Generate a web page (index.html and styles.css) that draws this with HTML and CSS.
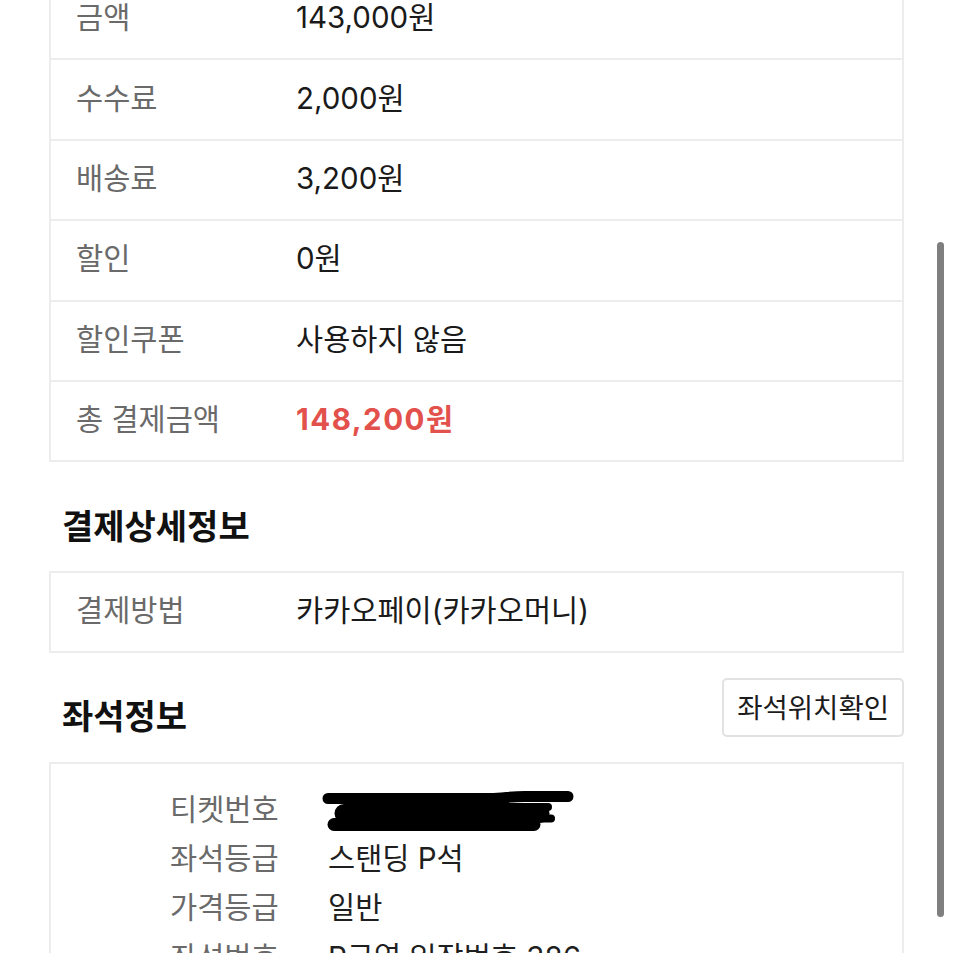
FILE: index.html
```html
<!DOCTYPE html>
<html lang="ko">
<head>
<meta charset="utf-8">
<title>결제정보</title>
<link rel="stylesheet" href="styles.css">
</head>
<body>
<div class="page">
  <div class="table first">
    <div class="row"><div class="label">금액</div><div class="value">143,000원</div></div>
    <div class="row"><div class="label">수수료</div><div class="value">2,000원</div></div>
    <div class="row"><div class="label">배송료</div><div class="value">3,200원</div></div>
    <div class="row"><div class="label">할인</div><div class="value">0원</div></div>
    <div class="row"><div class="label">할인쿠폰</div><div class="value">사용하지 않음</div></div>
    <div class="row"><div class="label">총 결제금액</div><div class="value total">148,200원</div></div>
  </div>

  <h2 class="section-title">결제상세정보</h2>
  <div class="table">
    <div class="row"><div class="label">결제방법</div><div class="value">카카오페이(카카오머니)</div></div>
  </div>

  <div class="section-head">
    <h2 class="section-title inline">좌석정보</h2>
    <button class="btn" type="button">좌석위치확인</button>
  </div>
  <div class="seat-box">
    <div class="seat-row">
      <div class="seat-label">티켓번호</div>
      <div class="seat-value redacted">
        <svg class="scribble" width="256" height="44" viewBox="0 0 256 44">
          <g stroke="#000" stroke-linecap="round" fill="none">
            <path d="M6 11.5 L 168 11.5 C 182 11.5, 190 9, 206 9.5 L 246 9.5" stroke-width="11"/>
            <path d="M22 26.5 L 218 26.5" stroke-width="19"/>
            <path d="M12 37.5 L 212 37.5" stroke-width="13"/>
            <path d="M200 31.5 L 229 31.5" stroke-width="8"/>
            <path d="M160 20 L 226 20" stroke-width="8"/>
          </g>
        </svg>
      </div>
    </div>
    <div class="seat-row"><div class="seat-label">좌석등급</div><div class="seat-value">스탠딩 P석</div></div>
    <div class="seat-row"><div class="seat-label">가격등급</div><div class="seat-value">일반</div></div>
    <div class="seat-row"><div class="seat-label">좌석번호</div><div class="seat-value">P구역 입장번호 386</div></div>
    <div class="seat-row"><div class="seat-label">관람일시</div><div class="seat-value">2023.10.21</div></div>
  </div>
</div>
<div class="scrollbar"></div>
</body>
</html>
```

FILE: styles.css
```css
html, body {
  margin: 0;
  padding: 0;
  background: #fff;
  overflow: hidden;
  height: 953px;
}

body {
  font-family: Inter, "Noto Sans CJK KR", sans-serif;
  color: #1c1c1c;
}

.page {
  padding: 0 49px;
  margin-top: -20px;
}

.table {
  border: 2px solid #ececec;
  border-top-width: 0;
}

.table:not(.first) {
  border-top-width: 2px;
}

.row {
  box-sizing: border-box;
  display: grid;
  grid-template-columns: 220px 1fr;
  align-items: center;
  height: 80.4px;
  padding: 0 0 8px 25px;
  border-bottom: 2px solid #ececec;
  font-size: 29.5px;
}

.row:last-child {
  border-bottom: 0;
  height: 78.4px;
}

.label {
  color: #6a6a6a;
}

.value {
  color: #1a1a1a;
}

.value.total {
  color: #e3514d;
  font-weight: 700;
  letter-spacing: 1.5px;
}

.section-title {
  margin: 44.6px 0 24px 13px;
  font-size: 34px;
  line-height: 40px;
  font-weight: 700;
  color: #111;
}

.section-head {
  display: flex;
  justify-content: space-between;
  align-items: flex-end;
  margin-top: 25px;
  margin-bottom: 25px;
}

.section-title.inline {
  margin: 0 0 0 13px;
}

.btn {
  box-sizing: border-box;
  height: 59px;
  padding: 0 13px 3px;
  border: 2px solid #e2e2e2;
  border-radius: 5px;
  background: #fff;
  font-family: inherit;
  font-size: 27.5px;
  color: #1c1c1c;
}

.seat-box {
  border: 2px solid #ececec;
  padding: 19px 0 0 119px;
  height: 300px;
}

.seat-row {
  box-sizing: border-box;
  display: grid;
  grid-template-columns: 158px 1fr;
  align-items: center;
  height: 49.5px;
  padding-bottom: 4px;
  font-size: 29.5px;
}

.seat-label {
  color: #6a6a6a;
}

.seat-value {
  color: #1f1f1f;
}

.scribble {
  display: block;
  margin: 4px 0 0 -6px;
}

.scrollbar {
  position: fixed;
  left: 937px;
  top: 242px;
  width: 7px;
  height: 675px;
  border-radius: 4px;
  background: #7f7f7f;
}
```
